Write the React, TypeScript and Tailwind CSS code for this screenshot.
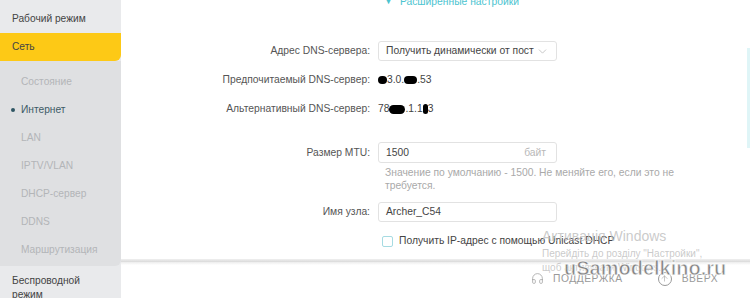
import { ChevronDown, Headphones, ArrowUp } from 'lucide-react';

const font = { fontFamily: '"Liberation Sans", Arial, sans-serif' };

const subItems = ['Состояние', 'Интернет', 'LAN', 'IPTV/VLAN', 'DHCP-сервер', 'DDNS', 'Маршрутизация'];

function Blob({ w, h = 8 }: { w: number; h?: number }) {
  return <span className="inline-block bg-black rounded-full align-middle" style={{ width: w, height: h }} />;
}

function Sidebar() {
  return (
    <div className="w-[121px] shrink-0 bg-[#e9eaec] flex flex-col text-[10.2px]">
      <div className="h-[33px] shrink-0 flex items-center pl-[12px] pt-[4px] text-[#444]">Рабочий режим</div>
      <div className="h-[28px] shrink-0 flex items-center pl-[12px] bg-[#fdc916] rounded-br-[6px] text-[#444]">Сеть</div>
      <div className="shrink-0 bg-[#dfe0e2] rounded-br-[6px] pt-[7px] pb-[2px]">
        {subItems.map((s) => {
          const active = s === 'Интернет';
          return (
            <div key={s} className="h-[28px] flex items-center relative pl-[21px]">
              {active && <span className="absolute left-[11px] w-[4px] h-[4px] rounded-full bg-[#2f5563]" />}
              <span className={active ? 'text-[#3d5a66]' : 'text-[#b3b5b8]'}>{s}</span>
            </div>
          );
        })}
      </div>
      <div className="shrink-0 pl-[12px] pt-[8px] leading-[14px] text-[#444]">
        Беспроводной
        <br />
        режим
      </div>
    </div>
  );
}

function Label({ children }: { children: React.ReactNode }) {
  return <div className="w-[249px] shrink-0 text-right text-[#555]">{children}</div>;
}

function MainArea() {
  return (
    <div className="flex-1 flex flex-col bg-white relative">
      <div className="h-[259px] shrink-0 flex flex-col text-[10.3px]">
        <div className="h-[14px] shrink-0 mt-[-5px] flex items-center pl-[263px] text-[#4cc4d0]">
          <span className="text-[9px] mr-[7px]">▼</span>
          <span>Расширенные настройки</span>
        </div>

        <div className="h-[20px] shrink-0 mt-[32px] flex items-center gap-2">
          <Label>Адрес DNS-сервера:</Label>
          <div className="w-[179px] h-[20px] border border-[#e2e2e2] rounded-[3px] flex items-center pl-[7px] pr-[7px] text-[#444]">
            <span className="flex-1 whitespace-nowrap overflow-hidden">Получить динамически от пост</span>
            <ChevronDown size={13} strokeWidth={1.5} className="text-[#bbb] shrink-0" />
          </div>
        </div>

        <div className="h-[20px] shrink-0 mt-[9px] flex items-center gap-2">
          <Label>Предпочитаемый DNS-сервер:</Label>
          <div className="flex items-center text-[#444]">
            <Blob w={9} />
            <span>3.0.</span>
            <Blob w={13} />
            <span>.53</span>
          </div>
        </div>

        <div className="h-[20px] shrink-0 mt-[9px] flex items-center gap-2">
          <Label>Альтернативный DNS-сервер:</Label>
          <div className="flex items-center text-[#444]">
            <span>78</span>
            <Blob w={16} h={9} />
            <span>.1.1</span>
            <Blob w={5} h={10} />
            <span>3</span>
          </div>
        </div>

        <div className="h-[21px] shrink-0 mt-[23px] flex items-center gap-2">
          <Label>Размер MTU:</Label>
          <div className="w-[179px] h-[21px] border border-[#e2e2e2] rounded-[3px] flex items-center pl-[7px] pr-[10px]">
            <span className="flex-1 text-[#444]">1500</span>
            <span className="text-[#b8b8b8]">байт</span>
          </div>
        </div>

        <div className="shrink-0 mt-[3px] pl-[264px] leading-[13px] text-[#a9a9a9] whitespace-nowrap">
          Значение по умолчанию - 1500. Не меняйте его, если это не
          <br />
          требуется.
        </div>

        <div className="h-[20px] shrink-0 mt-[10px] flex items-center gap-2">
          <Label>Имя узла:</Label>
          <div className="w-[179px] h-[20px] border border-[#e2e2e2] rounded-[3px] flex items-center pl-[7px] text-[#444]">
            Archer_C54
          </div>
        </div>

        <div className="h-[20px] shrink-0 mt-[9px] flex items-center pl-[261px]">
          <span className="w-[11px] h-[11px] border border-[#a6dbe2] rounded-[2px] mr-[6px]" />
          <span className="text-[#444]">Получить IP-адрес с помощью Unicast DHCP</span>
        </div>
      </div>

      <div className="h-[3px] shrink-0 bg-gradient-to-b from-[#f0f0f0] to-[#d9d9d9]" />
      <div className="h-[3px] shrink-0 bg-gradient-to-b from-[#ececec] to-white" />

      <div className="flex-1 flex items-center text-[10.3px] text-[#9a9a9a] pl-[410px] pb-[6px]">
        <Headphones size={13} strokeWidth={1.3} className="text-[#999] mr-[9px]" />
        <span className="tracking-[0.5px]">ПОДДЕРЖКА</span>
        <span className="ml-[35px] w-[14px] h-[14px] rounded-full border border-[#999] flex items-center justify-center mr-[10px]">
          <ArrowUp size={9} strokeWidth={1.5} />
        </span>
        <span className="tracking-[0.5px]">ВВЕРХ</span>
      </div>

      <div className="absolute left-[421px] top-[229px] pointer-events-none text-[#bdbdbd]/80 leading-none">
        <div className="text-[14px]">Активація Windows</div>
        <div className="text-[10px] mt-[6px]">Перейдіть до розділу "Настройки",</div>
        <div className="text-[10px] mt-[4px]">щоб активувати Windows.</div>
      </div>

      <div
        className="absolute left-[443px] top-[258px] pointer-events-none text-[20px] font-bold text-[#6f6f6f]/85 leading-none"
        style={{ WebkitTextStroke: '1px rgba(255,255,255,0.8)' }}
      >
        uSamodelkino.ru
      </div>
    </div>
  );
}

export default function App() {
  return (
    <div className="relative w-[750px] h-[298px] flex overflow-hidden bg-white" style={font}>
      <Sidebar />
      <MainArea />
      <div className="absolute left-[747px] top-[48px] w-[3px] h-[100px] bg-[#dff5f7]" />
    </div>
  );
}
